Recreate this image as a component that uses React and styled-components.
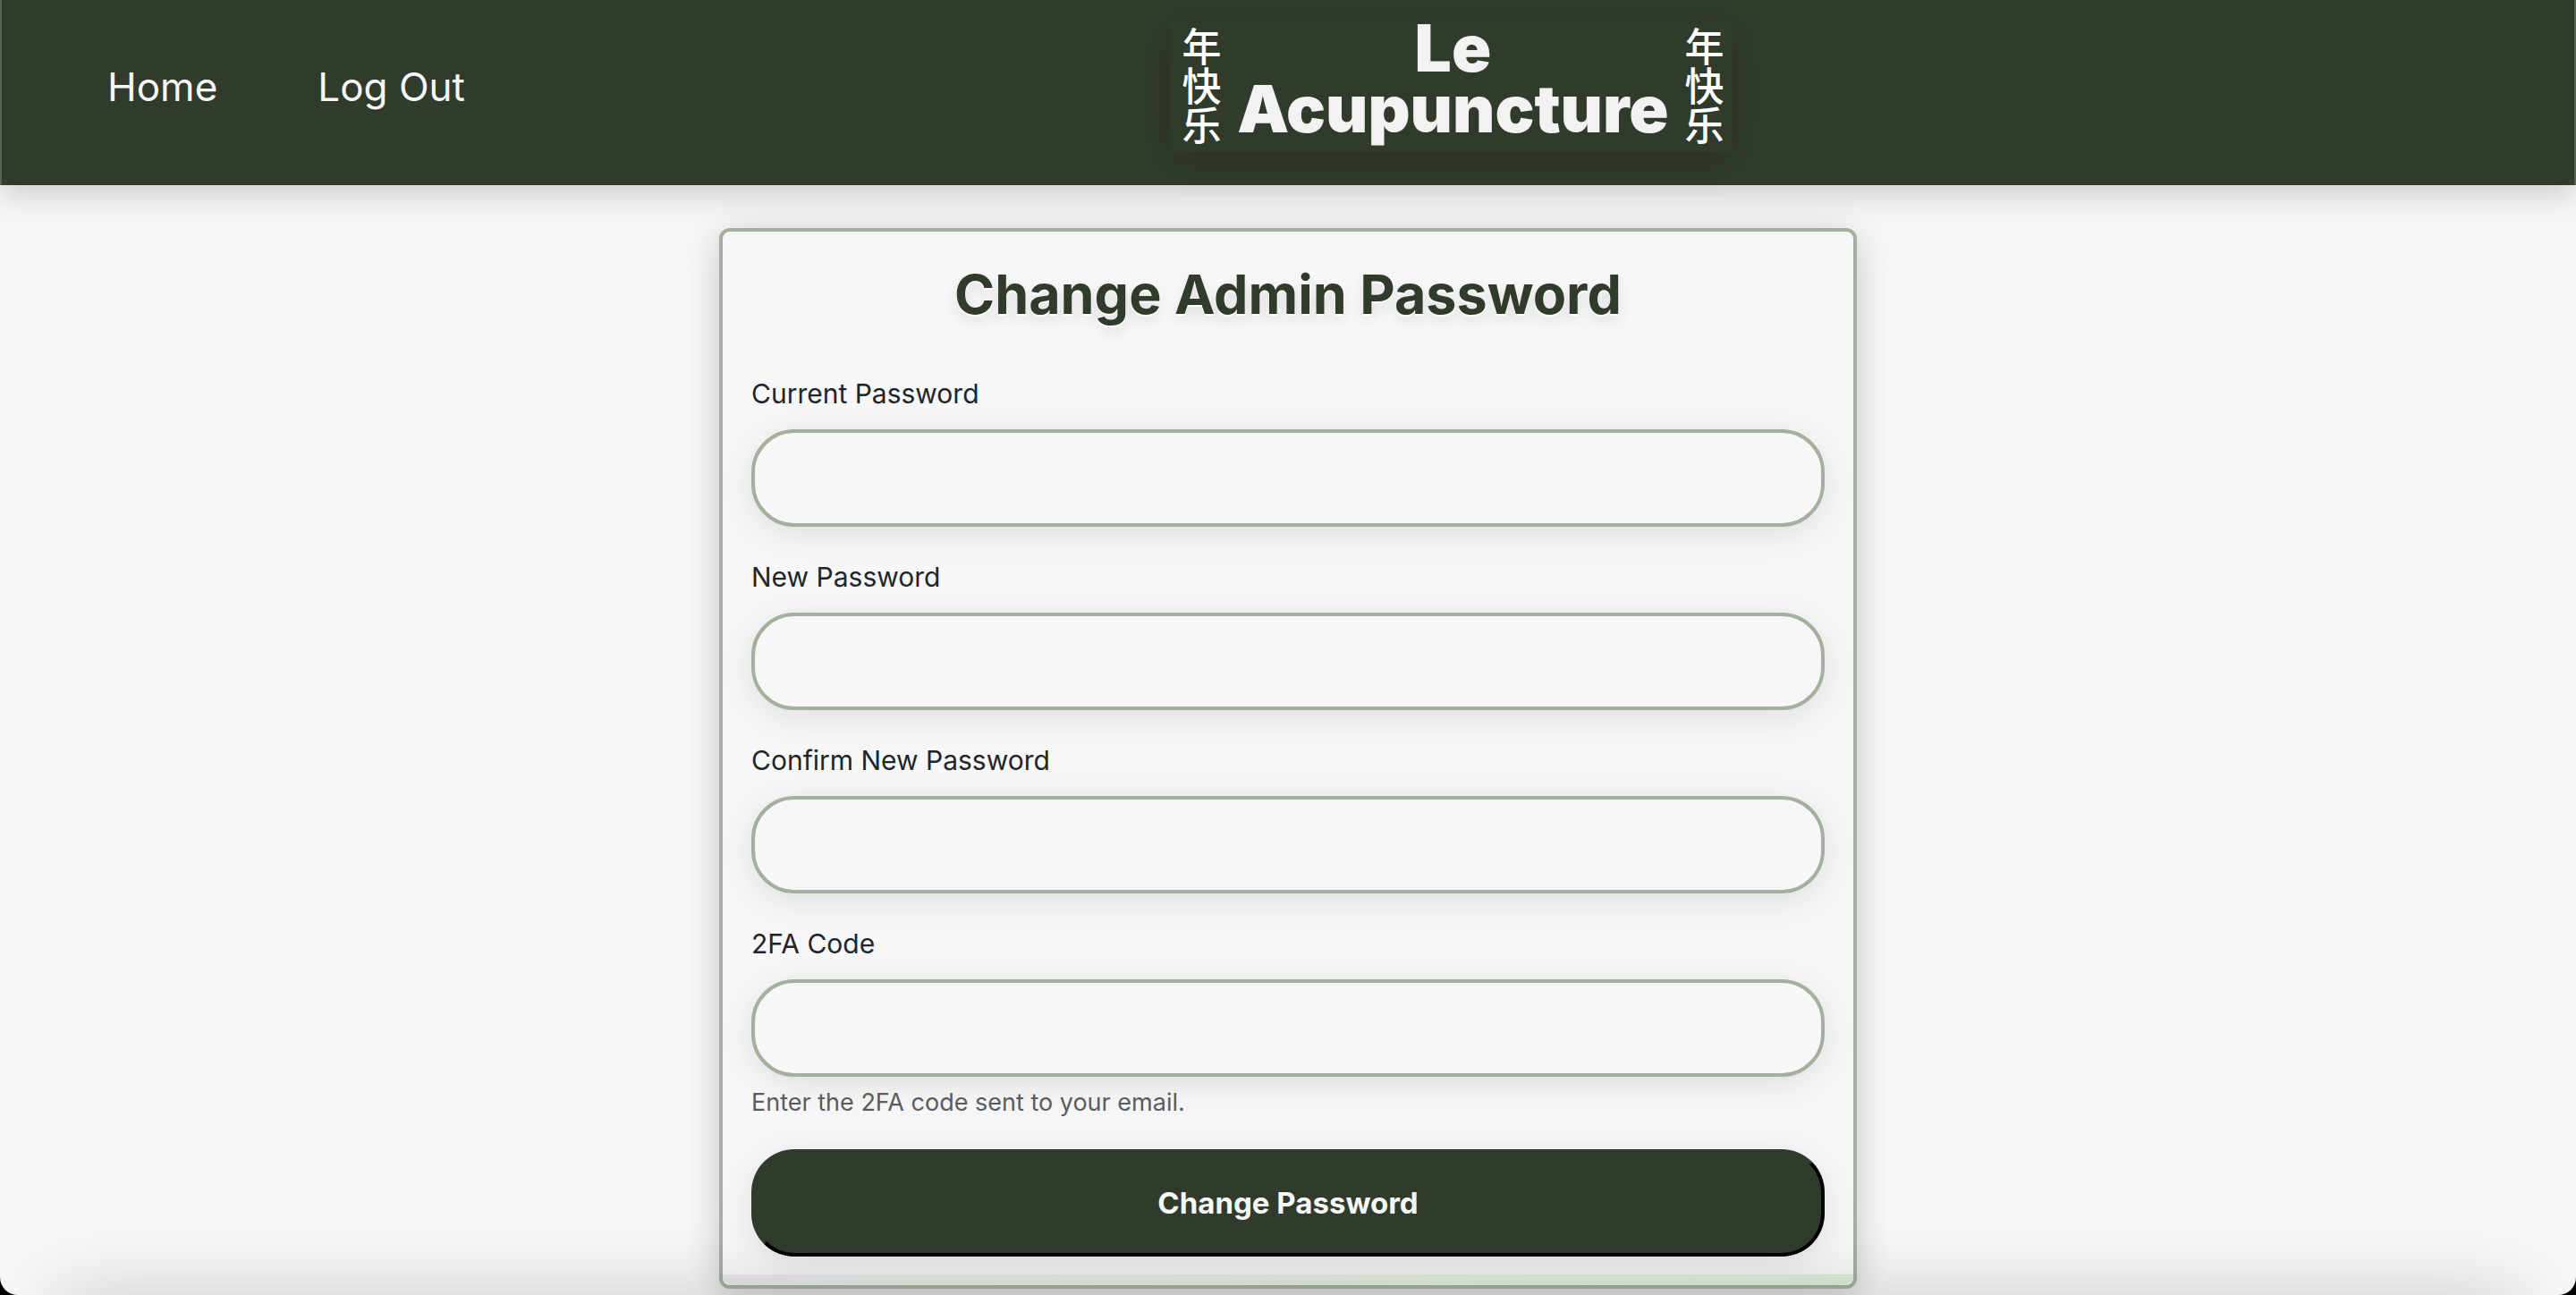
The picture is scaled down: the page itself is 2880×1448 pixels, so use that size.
import React from "react";
import styled, { createGlobalStyle } from "styled-components";

const color = {
  forest: "#313b2c",
  sage: "#a4af9d",
  paper: "#f7f7f7",
  ink: "#212529",
  muted: "#595c5f",
};

const sans = `Inter, "Liberation Sans", sans-serif`;
const softShadow = "0 8px 40px rgba(0, 0, 0, 0.1)";

const GlobalStyle = createGlobalStyle`
  *, *::before, *::after { box-sizing: border-box; }
  html { background: #000; }
  body {
    margin: 0;
    font-family: ${sans};
    color: ${color.ink};
  }
`;

const Page = styled.div`
  position: relative;
  min-height: 100vh;
  overflow: hidden;
  background: ${color.paper};
  border-radius: 0 0 20px 20px;
`;

const Header = styled.header`
  display: grid;
  grid-template-columns: 25fr auto 18fr;
  align-items: start;
  height: 207px;
  padding-top: 25px;
  background: ${color.forest};
  border: solid #596154;
  border-width: 0 2px;
  box-shadow: 0 12px 32px rgba(0, 0, 0, 0.16);
`;

const Nav = styled.nav`
  display: flex;
  gap: 112px;
  padding: 48px 0 0 118px;
`;

const NavLink = styled.a`
  font-size: 44px;
  line-height: 48px;
  color: ${color.paper};
  text-decoration: none;
`;

const Logo = styled.a`
  display: flex;
  align-items: center;
  justify-content: space-between;
  width: 629px;
  height: 146px;
  padding: 0 8px 0 11px;
  background: ${color.forest};
  box-shadow: 0 8px 40px rgba(0, 0, 0, 0.2);
  color: #f2f2f2;
  text-decoration: none;
`;

const LogoName = styled.span`
  padding-bottom: 20px;
  font-size: 73px;
  font-weight: 900;
  line-height: 68px;
  text-align: center;
`;

const LogoCharacters = styled.span`
  padding-bottom: 4px;
  writing-mode: vertical-rl;
  font-family: "Noto Sans CJK SC", sans-serif;
  font-size: 44px;
  font-weight: 500;
  line-height: 48px;
  color: #fff;
`;

const Main = styled.main`
  display: flex;
  justify-content: center;
  padding: 48px 32px 0;
`;

const Card = styled.form`
  position: relative;
  display: flex;
  flex-direction: column;
  gap: 32px;
  width: 100%;
  max-width: 1272px;
  padding: 32px;
  background: ${color.paper};
  border: 4px solid ${color.sage};
  border-radius: 12px;
  box-shadow: 0 8px 40px rgba(0, 0, 0, 0.2);

  &::after {
    content: "";
    position: absolute;
    inset: auto 0 0;
    height: 12px;
    border-radius: 0 0 12px 12px;
    background: linear-gradient(90deg, #e6e8e6, #dcecd8);
  }
`;

const Title = styled.h2`
  margin: 0 0 16px;
  font-size: 61px;
  font-weight: 700;
  line-height: 77px;
  text-align: center;
  color: ${color.forest};
  text-shadow: 0 2px 0 #fff, 0 8px 16px rgba(0, 0, 0, 0.1);
`;

const Field = styled.div`
  display: flex;
  flex-direction: column;
`;

const Label = styled.label`
  align-self: flex-start;
  margin-bottom: 15px;
  font-size: 30px;
  line-height: 49px;
`;

const Input = styled.input`
  width: 100%;
  height: 109px;
  padding: 0 48px;
  font: inherit;
  font-size: 30px;
  color: inherit;
  background: ${color.paper};
  border: 4px solid ${color.sage};
  border-radius: 48px;
  outline: none;
  box-shadow: ${softShadow};
`;

const Hint = styled.small`
  margin-top: 8px;
  font-size: 27px;
  line-height: 41px;
  color: ${color.muted};
`;

const Submit = styled.button`
  width: 100%;
  height: 120px;
  font-family: ${sans};
  font-size: 33px;
  font-weight: 700;
  color: ${color.paper};
  background: ${color.forest};
  border: 4px solid;
  border-color: ${color.forest} #000 #000 ${color.forest};
  border-radius: 48px;
  box-shadow: ${softShadow};
`;

const FooterShade = styled.div`
  position: absolute;
  right: 60px;
  bottom: -60px;
  left: 60px;
  height: 60px;
  box-shadow: 0 0 80px rgba(0, 0, 0, 0.2);
  pointer-events: none;
`;

const fields = [
  { id: "current", label: "Current Password", type: "password" },
  { id: "new", label: "New Password", type: "password" },
  { id: "confirm", label: "Confirm New Password", type: "password" },
  {
    id: "code",
    label: "2FA Code",
    type: "text",
    hint: "Enter the 2FA code sent to your email.",
  },
];

export default function App() {
  return (
    <>
      <GlobalStyle />
      <Page>
        <Header>
          <Nav>
            <NavLink href="#home">Home</NavLink>
            <NavLink href="#logout">Log Out</NavLink>
          </Nav>
          <Logo href="#home">
            <LogoCharacters>年快乐</LogoCharacters>
            <LogoName>
              Le
              <br />
              Acupuncture
            </LogoName>
            <LogoCharacters>年快乐</LogoCharacters>
          </Logo>
        </Header>
        <Main>
          <Card onSubmit={(event) => event.preventDefault()}>
            <Title>Change Admin Password</Title>
            {fields.map((field) => (
              <Field key={field.id}>
                <Label htmlFor={field.id}>{field.label}</Label>
                <Input
                  id={field.id}
                  type={field.type}
                  aria-describedby={field.hint ? `${field.id}-hint` : undefined}
                />
                {field.hint && <Hint id={`${field.id}-hint`}>{field.hint}</Hint>}
              </Field>
            ))}
            <Submit type="submit">Change Password</Submit>
          </Card>
        </Main>
        <FooterShade />
      </Page>
    </>
  );
}
